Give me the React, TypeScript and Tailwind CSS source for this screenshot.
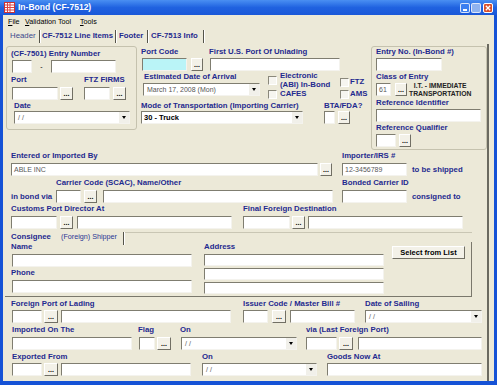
import React from "react";

const labelBase =
  "h-[10px] leading-[10px] whitespace-nowrap text-[7.8px] font-bold text-[#1f2a8f] shrink-0";

function Label({ children, className = "" }: { children: React.ReactNode; className?: string }) {
  return <div className={`${labelBase} ${className}`}>{children}</div>;
}

function Field({
  className = "",
  value,
  h = "h-[13px]",
  bg = "bg-white",
}: {
  className?: string;
  value?: string;
  h?: string;
  bg?: string;
}) {
  return (
    <div
      className={`${h} ${bg} shrink-0 overflow-hidden whitespace-nowrap border border-t-[#7f7d70] border-l-[#7f7d70] border-b-[#f4f3ee] border-r-[#f4f3ee] pl-[2px] text-[7px] leading-[11px] text-[#5a5a5a] ${className}`}
    >
      {value}
    </div>
  );
}

function Dots({ className = "" }: { className?: string }) {
  return (
    <div
      className={`h-[13px] shrink-0 flex items-end justify-center pb-[3px] border border-t-white border-l-white border-b-[#716f64] border-r-[#716f64] bg-[#f3f1e8] text-[7px] font-bold leading-[5px] text-black ${className}`}
    >
      ...
    </div>
  );
}

function Combo({
  className = "",
  value,
  bold = false,
}: {
  className?: string;
  value?: string;
  bold?: boolean;
}) {
  return (
    <div
      className={`h-[13px] shrink-0 flex bg-white border border-t-[#7f7d70] border-l-[#7f7d70] border-b-[#f4f3ee] border-r-[#f4f3ee] ${className}`}
    >
      <div
        className={
          bold
            ? "flex-1 pl-[2px] text-[7.5px] font-bold leading-[11px] text-black whitespace-nowrap overflow-hidden"
            : "flex-1 pl-[3px] text-[7px] leading-[11px] text-[#555] whitespace-nowrap overflow-hidden"
        }
      >
        {value}
      </div>
      <div className="w-[10px] flex items-center justify-center bg-[#f1f0ea]">
        <div className="w-0 h-0 border-l-[2.5px] border-r-[2.5px] border-t-[3px] border-l-transparent border-r-transparent border-t-black" />
      </div>
    </div>
  );
}

function Check({ className = "" }: { className?: string }) {
  return (
    <div
      className={`w-[9px] h-[9px] shrink-0 border border-t-[#8a887b] border-l-[#8a887b] border-b-white border-r-white bg-[#f6f5f0] ${className}`}
    />
  );
}

function TitleBar() {
  return (
    <div className="h-[15px] shrink-0 flex items-center bg-linear-to-b from-[#4a8ff2] via-[#2062e0] to-[#1a58d8] pl-[4px] pr-[4px]">
      <svg width="11" height="11" viewBox="0 0 11 11" className="shrink-0">
        <rect x="0.5" y="0.5" width="10" height="10" fill="#fff" stroke="#c33" />
        <path d="M1 3h9M1 5.5h9M1 8h9M3.5 1v9M6 1v9" stroke="#d44" strokeWidth="1" />
      </svg>
      <div className="ml-[3px] text-[8.5px] font-bold text-white leading-[15px] whitespace-nowrap">
        In-Bond (CF-7512)
      </div>
      <div className="flex-1" />
      <div className="w-[10px] h-[10px] rounded-[2px] bg-[#3c7ff0] border border-white/80 flex items-end justify-center pb-[1px]">
        <div className="w-[4px] h-[1.5px] bg-white" />
      </div>
      <div className="ml-[1px] w-[10px] h-[10px] rounded-[2px] bg-[#8fb3ef] border border-white/70" />
      <div className="ml-[2px] w-[10px] h-[10px] rounded-[2px] bg-[#d9502c] border border-white flex items-center justify-center">
        <svg width="6" height="6" viewBox="0 0 6 6">
          <path d="M0.8 0.8l4.4 4.4M5.2 0.8L0.8 5.2" stroke="#fff" strokeWidth="1.3" />
        </svg>
      </div>
    </div>
  );
}

function MenuBar() {
  return (
    <div className="h-[13px] shrink-0 flex items-center pl-[5px] text-[7.2px] text-black leading-[13px]">
      <div className="w-[17px]">
        <span className="underline">F</span>ile
      </div>
      <div className="w-[55px]">
        <span className="underline">V</span>alidation Tool
      </div>
      <div>
        <span className="underline">T</span>ools
      </div>
    </div>
  );
}

function TabSep() {
  return <div className="w-[2px] h-[13px] shrink-0 border-l border-l-[#55544a] border-r border-r-white" />;
}

function Tabs() {
  return (
    <div className="h-[16px] shrink-0 flex items-center pl-[7px] text-[7.8px] leading-[16px] whitespace-nowrap">
      <div className="w-[29px] text-[#3c4a8c]">Header</div>
      <TabSep />
      <div className="ml-[1px] w-[73px] font-bold text-[#1f2a8f]">CF-7512 Line Items</div>
      <TabSep />
      <div className="ml-[2px] w-[28px] font-bold text-[#1f2a8f]">Footer</div>
      <TabSep />
      <div className="ml-[2px] w-[52px] font-bold text-[#1f2a8f]">CF-7513 Info</div>
      <TabSep />
    </div>
  );
}

function TopSection() {
  return (
    <div className="mt-[2px] flex items-start h-[104px]">
      {/* left group */}
      <div className="ml-[3px] w-[131px] h-[84px] shrink-0 border border-[#c5c2ae] rounded-[3px] flex flex-col">
        <Label className="mt-[2px] ml-[4px]">(CF-7501) Entry Number</Label>
        <div className="mt-[1px] flex items-center">
          <Field className="ml-[5px] w-[20px]" />
          <div className="w-[19px] text-center text-[7px] leading-[13px] text-black">-</div>
          <Field className="w-[65px]" />
        </div>
        <div className="mt-[2px] flex">
          <Label className="ml-[4px] w-[73px]">Port</Label>
          <Label>FTZ FIRMS</Label>
        </div>
        <div className="mt-[2px] flex">
          <Field className="ml-[5px] w-[46px]" />
          <Dots className="ml-[2px] w-[13px]" />
          <Field className="ml-[11px] w-[26px]" />
          <Dots className="ml-[3px] w-[13px]" />
        </div>
        <Label className="mt-[1px] ml-[7px]">Date</Label>
        <Combo className="ml-[7px] w-[116px]" value="/ /" />
      </div>

      {/* middle */}
      <div className="w-[234px] shrink-0 flex flex-col">
        <div className="mt-[1px] flex">
          <Label className="ml-[4px] w-[68px]">Port Code</Label>
          <Label>First U.S. Port Of Unlading</Label>
        </div>
        <div className="mt-[1px] flex">
          <Field className="ml-[5px] w-[45px]" bg="bg-[#baf4f7]" />
          <Dots className="ml-[4px] w-[12px]" />
          <Field className="ml-[7px] w-[130px]" />
        </div>
        <div className="flex items-start h-[30px]">
          <div className="ml-[6px] w-[117px] shrink-0 flex flex-col">
            <Label className="mt-[1px] ml-[1px]">Estimated Date of Arrival</Label>
            <Combo className="mt-[1px] w-[117px]" value="March 17, 2008 (Mon)" />
          </div>
          <div className="ml-[8px] w-[72px] shrink-0 flex flex-col">
            <div className="flex items-start">
              <Check className="mt-[5px]" />
              <div className="ml-[3px] text-[7.8px] font-bold leading-[9px] text-[#1f2a8f] whitespace-nowrap">
                Electronic
                <br />
                (ABI) In-Bond
              </div>
            </div>
            <div className="flex items-center h-[10px]">
              <Check />
              <Label className="ml-[3px]">CAFES</Label>
            </div>
          </div>
          <div className="mt-[6px] flex flex-col">
            <div className="flex items-center h-[10px]">
              <Check />
              <Label className="ml-[1px]">FTZ</Label>
            </div>
            <div className="mt-[2px] flex items-center h-[10px]">
              <Check />
              <Label className="ml-[1px]">AMS</Label>
            </div>
          </div>
        </div>
        <div className="flex">
          <Label className="ml-[4px] w-[183px]">Mode of Transportation (Importing Carrier)</Label>
          <Label>BTA/FDA?</Label>
        </div>
        <div className="flex">
          <Combo className="ml-[4px] w-[162px]" value="30 - Truck" bold />
          <Field className="ml-[21px] w-[11px]" />
          <Dots className="ml-[3px] w-[12px]" />
        </div>
      </div>

      {/* right group */}
      <div className="w-[116px] h-[104px] shrink-0 border border-[#c5c2ae] rounded-[3px] flex flex-col">
        <Label className="ml-[4px]">Entry No. (In-Bond #)</Label>
        <Field className="mt-[1px] ml-[4px] w-[66px]" />
        <Label className="mt-[1px] ml-[4px]">Class of Entry</Label>
        <div className="mt-[1px] h-[14px] flex items-start">
          <Field className="ml-[4px] w-[15px]" value="61" />
          <Dots className="ml-[4px] w-[12px]" />
          <div className="ml-[2px] -mt-[1px] text-center text-[6.8px] font-bold leading-[8px] text-[#222] whitespace-nowrap">
            I.T. - IMMEDIATE
            <br />
            TRANSPORTATION
          </div>
        </div>
        <Label className="ml-[4px] mt-[1px] h-[9px] leading-[9px]">Reference Identifier</Label>
        <Field className="mt-[1px] ml-[4px] w-[105px]" />
        <Label className="mt-[1px] ml-[4px]">Reference Qualifier</Label>
        <div className="mt-[1px] flex">
          <Field className="ml-[4px] w-[20px]" />
          <Dots className="ml-[3px] w-[12px]" />
        </div>
      </div>
    </div>
  );
}

function MiddleSection() {
  return (
    <div className="flex flex-col">
      <div className="mt-[1px] flex">
        <Label className="ml-[8px] w-[331px]">Entered or Imported By</Label>
        <Label>Importer/IRS #</Label>
      </div>
      <div className="mt-[2px] flex items-center">
        <Field className="ml-[8px] w-[307px]" value="ABLE INC" />
        <Dots className="ml-[2px] w-[12px]" />
        <Field className="ml-[10px] w-[65px]" value="12-3456789" />
        <Label className="ml-[5px]">to be shipped</Label>
      </div>
      <div className="mt-[2px] flex">
        <Label className="ml-[53px] w-[286px]">Carrier Code (SCAC), Name/Other</Label>
        <Label>Bonded Carrier ID</Label>
      </div>
      <div className="mt-[2px] flex items-center">
        <Label className="ml-[8px] w-[45px]">in bond via</Label>
        <Field className="w-[25px]" />
        <Dots className="ml-[3px] w-[13px]" />
        <Field className="ml-[6px] w-[230px]" />
        <Field className="ml-[9px] w-[65px]" />
        <Label className="ml-[5px]">consigned to</Label>
      </div>
      <div className="mt-[1px] flex">
        <Label className="ml-[8px] w-[232px]">Customs Port Director At</Label>
        <Label>Final Foreign Destination</Label>
      </div>
      <div className="mt-[2px] flex">
        <Field className="ml-[8px] w-[46px]" />
        <Dots className="ml-[3px] w-[13px]" />
        <Field className="ml-[4px] w-[155px]" />
        <Field className="ml-[11px] w-[47px]" />
        <Dots className="ml-[2px] w-[13px]" />
        <Field className="ml-[3px] w-[155px]" />
      </div>
    </div>
  );
}

function ConsigneeSection() {
  return (
    <div className="mt-[3px] ml-[2px] w-[467px] h-[65px] flex flex-col">
      <div className="h-[10px] flex items-stretch">
        <Label className="ml-[6px] w-[50px]">Consignee</Label>
        <div className="w-[62px] text-[7.2px] leading-[10px] text-[#2a3594] whitespace-nowrap">(Foreign) Shipper</div>
        <TabSep />
        <div className="flex-1 border-t border-t-[#c9c6b4]" />
      </div>
      <div className="flex-1 flex border-r border-b border-[#7a786c]">
        <div className="ml-[6px] w-[181px] shrink-0 flex flex-col">
          <Label>Name</Label>
          <Field className="mt-[2px] ml-[1px] w-[180px]" />
          <Label className="mt-[1px]">Phone</Label>
          <Field className="mt-[2px] ml-[1px] w-[180px]" />
        </div>
        <div className="ml-[12px] w-[180px] shrink-0 flex flex-col">
          <Label>Address</Label>
          <Field className="mt-[2px] w-[180px]" h="h-[12px]" />
          <Field className="mt-[2px] w-[180px]" h="h-[12px]" />
          <Field className="mt-[2px] w-[180px]" h="h-[12px]" />
        </div>
        <div className="ml-[8px] mt-[4px] w-[73px] h-[13px] flex items-center justify-center border border-t-white border-l-white border-b-[#716f64] border-r-[#716f64] bg-[#f3f1e8] text-[7.5px] font-bold text-black leading-[11px] whitespace-nowrap">
          Select from List
        </div>
      </div>
    </div>
  );
}

function BottomSection() {
  return (
    <div className="flex flex-col">
      <div className="mt-[2px] flex">
        <Label className="ml-[8px] w-[232px]">Foreign Port of Lading</Label>
        <Label className="w-[122px]">Issuer Code / Master Bill #</Label>
        <Label>Date of Sailing</Label>
      </div>
      <div className="mt-[1px] flex">
        <Field className="ml-[9px] w-[30px]" />
        <Dots className="ml-[2px] w-[14px]" />
        <Field className="ml-[3px] w-[170px]" />
        <Field className="ml-[12px] w-[25px]" />
        <Dots className="ml-[4px] w-[14px]" />
        <Field className="ml-[4px] w-[65px]" />
        <Combo className="ml-[10px] w-[117px]" value="/ /" />
      </div>
      <div className="mt-[2px] flex">
        <Label className="ml-[9px] w-[126px]">Imported On The</Label>
        <Label className="w-[42px]">Flag</Label>
        <Label className="w-[126px]">On</Label>
        <Label>via (Last Foreign Port)</Label>
      </div>
      <div className="mt-[2px] flex">
        <Field className="ml-[9px] w-[120px]" />
        <Field className="ml-[7px] w-[16px]" />
        <Dots className="ml-[2px] w-[14px]" />
        <Combo className="ml-[10px] w-[116px]" value="/ /" />
        <Field className="ml-[9px] w-[31px]" />
        <Dots className="ml-[2px] w-[14px]" />
        <Field className="ml-[5px] w-[124px]" />
      </div>
      <div className="mt-[2px] flex">
        <Label className="ml-[9px] w-[190px]">Exported From</Label>
        <Label className="w-[125px]">On</Label>
        <Label>Goods Now At</Label>
      </div>
      <div className="mt-[1px] flex">
        <Field className="ml-[9px] w-[30px]" />
        <Dots className="ml-[2px] w-[14px]" />
        <Field className="ml-[3px] w-[130px]" />
        <Combo className="ml-[11px] w-[115px]" value="/ /" />
        <Field className="ml-[10px] w-[155px]" />
      </div>
    </div>
  );
}

export default function App() {
  return (
    <div className="w-[497px] h-[385px] flex flex-col bg-[#1552d6] overflow-hidden font-['Liberation_Sans',Arial,sans-serif]">
      <TitleBar />
      <div className="flex-1 mx-[3px] mb-[4px] bg-[#ece9d8] flex flex-col">
        <MenuBar />
        <Tabs />
        <div className="flex-1 w-[486px] border-r-2 border-r-[#6b6a60] flex flex-col">
          <TopSection />
          <MiddleSection />
          <ConsigneeSection />
          <BottomSection />
        </div>
      </div>
    </div>
  );
}
